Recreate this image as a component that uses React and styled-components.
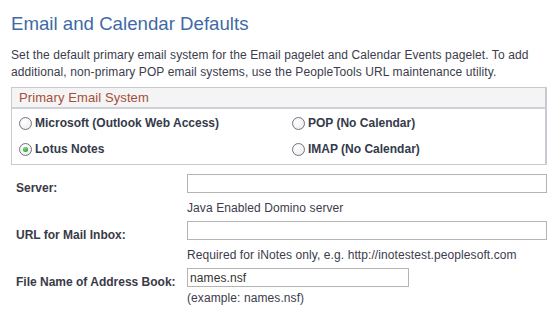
import React from "react";
import styled, { createGlobalStyle } from "styled-components";

const Global = createGlobalStyle`
  html, body { margin: 0; padding: 0; background: #fff; }
  body { font-family: "Liberation Sans", Arial, sans-serif; color: #333; }
`;

const Page = styled.div`
  width: 559px;
  padding: 12px 11px 0 11px;
  box-sizing: border-box;
`;

const Title = styled.h1`
  margin: 0;
  font-size: 18.67px;
  font-weight: normal;
  line-height: 24px;
  color: #3f6aa6;
`;

const Intro = styled.p`
  margin: 11px 0 0 0;
  font-size: 12px;
  letter-spacing: 0.1px;
  line-height: 17px;
  color: #3c3c4c;
`;

const GroupBox = styled.div`
  margin-top: 6px;
  border: 1px solid #c9c9d1;
  border-right-width: 2px;
  width: 536px;
  box-sizing: border-box;
`;

const GroupHeader = styled.div`
  background: #f4f4f4;
  border-bottom: 2px solid #d0d0d8;
  height: 19px;
  padding-left: 7px;
  font-size: 13px;
  letter-spacing: 0.1px;
  line-height: 19px;
  color: #a44f3a;
`;

const RadioGrid = styled.div`
  display: grid;
  grid-template-columns: 273px 1fr;
  row-gap: 8px;
  padding: 5px 0 6px 7px;
`;

const RadioLabel = styled.label`
  display: flex;
  align-items: center;
  gap: 3px;
  font-size: 12px;
  font-weight: bold;
  line-height: 18px;
  color: #343a4a;
`;

const RadioCircle = styled.span`
  width: 11px;
  height: 11px;
  border-radius: 50%;
  border: 1px solid #6e7480;
  background: radial-gradient(circle at 40% 35%, #ffffff 0%, #f2f2f2 60%, #dcdcdc 100%);
  display: flex;
  align-items: center;
  justify-content: center;
  flex: none;
  &::after {
    content: "";
    width: 5px;
    height: 5px;
    border-radius: 50%;
    background: radial-gradient(circle at 40% 35%, #7ee07e 0%, #2da12d 70%, #1c7d1c 100%);
    display: ${(p) => (p.$checked ? "block" : "none")};
  }
`;

const Form = styled.div`
  display: grid;
  grid-template-columns: 171px 1fr;
  padding-left: 5px;
  margin-top: 9px;
`;

const FieldLabel = styled.div`
  font-size: 12px;
  font-weight: bold;
  color: #3a3a48;
  line-height: 18px;
  padding-top: 5px;
`;

const FieldCell = styled.div`
  display: flex;
  flex-direction: column;
  margin-bottom: 4px;
`;

const TextInput = styled.input`
  box-sizing: border-box;
  width: ${(p) => p.$w || 360}px;
  height: 19px;
  border: 1px solid #b4b4b4;
  padding: 0 2px;
  margin: 0;
  font-family: "Liberation Sans", Arial, sans-serif;
  font-size: 12px;
  letter-spacing: 0.1px;
  color: #333;
  outline: none;
`;

const Help = styled.div`
  font-size: 12px;
  letter-spacing: 0.09px;
  line-height: 18px;
  margin-top: ${(p) => (p.$tight ? 2 : 6)}px;
  color: #3c3c4c;
`;

const Radio = ({ checked, children }) => (
  <RadioLabel>
    <RadioCircle $checked={checked} />
    {children}
  </RadioLabel>
);

export default function App() {
  return (
    <>
      <Global />
      <Page>
        <Title>Email and Calendar Defaults</Title>
        <Intro>
          Set the default primary email system for the Email pagelet and Calendar Events pagelet. To add
          additional, non-primary POP email systems, use the PeopleTools URL maintenance utility.
        </Intro>
        <GroupBox>
          <GroupHeader>Primary Email System</GroupHeader>
          <RadioGrid>
            <Radio>Microsoft (Outlook Web Access)</Radio>
            <Radio>POP (No Calendar)</Radio>
            <Radio checked>Lotus Notes</Radio>
            <Radio>IMAP (No Calendar)</Radio>
          </RadioGrid>
        </GroupBox>
        <Form>
          <FieldLabel>Server:</FieldLabel>
          <FieldCell>
            <TextInput />
            <Help>Java Enabled Domino server</Help>
          </FieldCell>
          <FieldLabel>URL for Mail Inbox:</FieldLabel>
          <FieldCell>
            <TextInput />
            <Help>Required for iNotes only, e.g. http://inotestest.peoplesoft.com</Help>
          </FieldCell>
          <FieldLabel>File Name of Address Book:</FieldLabel>
          <FieldCell>
            <TextInput $w={222} defaultValue="names.nsf" />
            <Help $tight>(example: names.nsf)</Help>
          </FieldCell>
        </Form>
      </Page>
    </>
  );
}
